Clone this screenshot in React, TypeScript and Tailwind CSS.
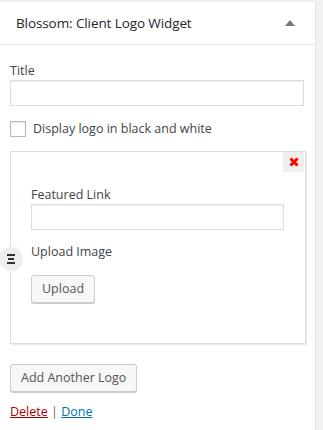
import React from "react";

const font = { fontFamily: '"Open Sans", "Noto Sans", sans-serif' };

function DragHandle() {
  return (
    <div className="absolute left-[-12px] top-[95px] w-[24px] h-[24px] rounded-full bg-[#eeeeee] flex items-center justify-center">
      <svg width="8" height="10" viewBox="0 0 8 10">
        <rect x="0" y="0" width="8" height="2" fill="#333" />
        <rect x="1" y="4" width="6" height="2" fill="#333" />
        <rect x="0" y="8" width="8" height="2" fill="#333" />
      </svg>
    </div>
  );
}

export default function App() {
  return (
    <div className="w-[323px] h-[430px] bg-[#f1f1f1] pt-[2px] overflow-hidden text-[#444]" style={font}>
      <div className="w-[316px] h-[428px] bg-white border-r border-[#e5e5e5]">
        {/* Header */}
        <div className="h-[43px] flex items-center justify-between pl-[16px] pr-[20px] border-b border-[#e5e5e5]">
          <span className="text-[13.5px] font-medium text-[#23282d] tracking-[-0.1px]">Blossom: Client Logo Widget</span>
          <svg width="10" height="6" viewBox="0 0 10 6">
            <polygon points="5,0 10,6 0,6" fill="#72777c" />
          </svg>
        </div>

        <div className="px-[10px] pt-[17px]">
          <label className="block text-[12.5px] text-[#444] leading-[18px]">Title</label>
          <div className="w-[294px] h-[26px] border border-[#dddddd] shadow-[inset_0_1px_2px_rgba(0,0,0,0.07)]" />

          <div className="flex items-center mt-[14px] h-[18px]">
            <div className="w-[16px] h-[16px] border border-[#b4b9be] shadow-[inset_0_1px_2px_rgba(0,0,0,0.1)]" />
            <span className="ml-[7px] text-[12.5px] text-[#444] leading-[18px]">Display logo in black and white</span>
          </div>

          {/* Logo item */}
          <div className="relative mt-[13px] w-[296px] h-[193px] border border-[#dddddd] shadow-[1px_1px_1px_rgba(0,0,0,0.08)] pl-[20px] pt-[34px]">
            <div className="absolute right-[1px] top-0 w-[21px] h-[20px] bg-[#eeeeee] flex items-center justify-center">
              <svg width="10" height="10" viewBox="0 0 10 10">
                <path d="M1.5 1.5 L8.5 8.5 M8.5 1.5 L1.5 8.5" stroke="#ff0000" strokeWidth="3" />
              </svg>
            </div>
            <DragHandle />
            <label className="block text-[12.5px] text-[#444] leading-[18px]">Featured Link</label>
            <div className="w-[253px] h-[26px] border border-[#dddddd] shadow-[inset_0_1px_2px_rgba(0,0,0,0.07)]" />
            <label className="block mt-[13px] text-[12.5px] text-[#444] leading-[18px]">Upload Image</label>
            <button className="block mt-[14px] h-[28px] px-[10px] border border-[#cccccc] rounded-[3px] bg-[#f7f7f7] shadow-[0_1px_0_#cccccc] text-[12.5px] text-[#555]">
              Upload
            </button>
          </div>

          <button className="block mt-[20px] h-[28px] px-[10px] border border-[#cccccc] rounded-[3px] bg-[#f7f7f7] shadow-[0_1px_0_#cccccc] text-[12.5px] text-[#555]">
            Add Another Logo
          </button>

          <div className="mt-[11px] text-[12.5px] leading-[18px]">
            <span className="text-[#a00] underline">Delete</span>
            <span className="text-[#666]"> | </span>
            <span className="text-[#0073aa] underline">Done</span>
          </div>
        </div>
      </div>
    </div>
  );
}
